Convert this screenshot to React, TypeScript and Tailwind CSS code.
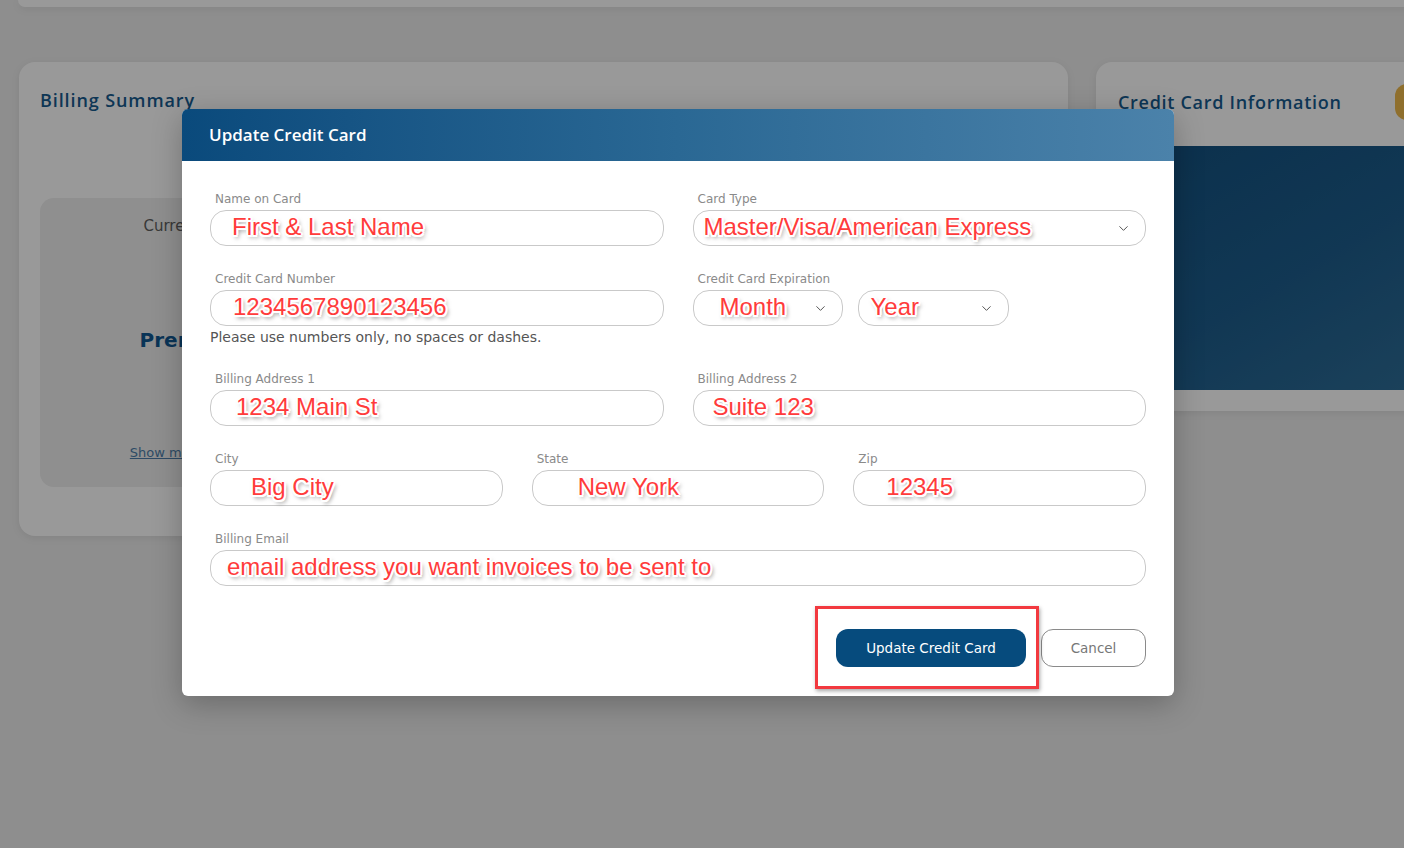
import { ChevronDown } from "lucide-react";
import type { ReactNode } from "react";

const note =
    "relative -top-[1px] font-['Liberation_Sans',Arial,sans-serif] text-[24px] leading-none text-[#ff3b3b] whitespace-nowrap [text-shadow:0_0_2px_#fff,1.5px_1.5px_0_#fff,-1.5px_-1.5px_0_#fff,1.5px_-1.5px_0_#fff,-1.5px_1.5px_0_#fff,2px_0_0_#fff,-2px_0_0_#fff,0_2px_0_#fff,0_-2px_0_#fff,2px_3px_4px_rgba(0,0,0,0.55)]";

function Field({ label, children }: { label: string; children: ReactNode }) {
    return (
        <div className="flex flex-col">
            <label className="ml-[5px] mb-[4px] text-[12px] leading-[13px] text-[#8a8a8a]">{label}</label>
            {children}
        </div>
    );
}

function Box({ text, pad, select, className = "" }: { text: string; pad: string; select?: boolean; className?: string }) {
    return (
        <div className={`flex h-[36px] items-center rounded-[16px] border border-[#c9c9c9] bg-white pr-[14px] ${className}`}>
            <span className={`${note} ${pad}`}>{text}</span>
            {select && <ChevronDown className="ml-auto text-[#555]" size={15} strokeWidth={1.6} />}
        </div>
    );
}

export default function App() {
    return (
        <div className="relative h-[848px] w-full overflow-hidden bg-[#ededed] font-['DejaVu_Sans',sans-serif]">
            {/* page behind the dialog */}
            <div className="w-[1560px]">
                <div className="ml-[18px] h-[7px] rounded-b-[12px] bg-white shadow-[0_2px_8px_rgba(0,0,0,0.08)]" />
                <div className="flex items-start gap-[28px] pl-[19px] pt-[55px]">
                    <section className="h-[474px] w-[1049px] rounded-[16px] bg-white px-[21px] pt-[25px] shadow-[0_2px_8px_rgba(0,0,0,0.08)]">
                        <h2 className="font-['Open_Sans',sans-serif] text-[18px] leading-[26px] font-semibold tracking-[0.9px] text-[#165a8e]">Billing Summary</h2>
                        <div className="mt-[85px] flex h-[289px] w-[300px] flex-col items-center rounded-[14px] bg-[#eeeeee] pt-[18px]">
                            <div className="text-[15px] leading-[20px] text-[#606060]">Current Plan</div>
                            <div className="mt-[90px] text-[20px] leading-[28px] font-semibold text-[#0f5892]">Premium</div>
                            <a className="mt-[90px] text-[13px] leading-[18px] text-[#4d7eaa] underline">Show more details</a>
                        </div>
                    </section>
                    <section className="h-[349px] w-[421px] rounded-[16px] bg-white shadow-[0_2px_8px_rgba(0,0,0,0.08)]">
                        <div className="flex h-[80px] items-center px-[22px]">
                            <h2 className="font-['Open_Sans',sans-serif] text-[18px] leading-[26px] font-semibold tracking-[0.7px] text-[#165a8e]">Credit Card Information</h2>
                            <div className="ml-auto h-[36px] w-[100px] rounded-[12px] bg-[#eeb94b]" />
                        </div>
                        <div className="mt-[4px] h-[244px] bg-linear-to-br from-[#12507f] via-[#1d5d8c] to-[#33739b]" />
                    </section>
                </div>
            </div>

            <div className="absolute inset-0 bg-black/40" />

            {/* dialog */}
            <div className="absolute left-[182px] top-[109px] w-[992px] overflow-hidden rounded-[6px] bg-white shadow-[0_8px_30px_rgba(0,0,0,0.25)]">
                <div className="flex h-[52px] items-center bg-linear-to-r from-[#0a4a7c] via-[#2a6894] to-[#4b82aa] px-[27px]">
                    <h3 className="font-['Open_Sans',sans-serif] text-[17px] font-semibold text-white">Update Credit Card</h3>
                </div>
                <div className="flex flex-col gap-[27px] px-[28px] pb-[29px] pt-[32px]">
                    <div className="grid grid-cols-2 gap-x-[29px]">
                        <Field label="Name on Card">
                            <Box text="First & Last Name" pad="pl-[21px]" />
                        </Field>
                        <Field label="Card Type">
                            <Box text="Master/Visa/American Express" pad="pl-[10px]" select />
                        </Field>
                    </div>
                    <div className="grid grid-cols-2 gap-x-[29px]">
                        <div className="flex flex-col">
                            <Field label="Credit Card Number">
                                <Box text="1234567890123456" pad="pl-[22px]" />
                            </Field>
                            <p className="mt-[2px] text-[14px] leading-[18px] text-[#555]">Please use numbers only, no spaces or dashes.</p>
                        </div>
                        <Field label="Credit Card Expiration">
                            <div className="flex gap-[15px]">
                                <Box text="Month" pad="pl-[26px]" select className="w-[150px]" />
                                <Box text="Year" pad="pl-[12px]" select className="w-[151px]" />
                            </div>
                        </Field>
                    </div>
                    <div className="grid grid-cols-2 gap-x-[29px]">
                        <Field label="Billing Address 1">
                            <Box text="1234 Main St" pad="pl-[25px]" />
                        </Field>
                        <Field label="Billing Address 2">
                            <Box text="Suite 123" pad="pl-[19px]" />
                        </Field>
                    </div>
                    <div className="grid grid-cols-3 gap-x-[29px]">
                        <Field label="City">
                            <Box text="Big City" pad="pl-[40px]" />
                        </Field>
                        <Field label="State">
                            <Box text="New York" pad="pl-[45px]" />
                        </Field>
                        <Field label="Zip">
                            <Box text="12345" pad="pl-[32px]" />
                        </Field>
                    </div>
                    <Field label="Billing Email">
                        <Box text="email address you want invoices to be sent to" pad="pl-[16px]" />
                    </Field>
                    <div className="mt-[16px] flex justify-end gap-[15px]">
                        <div className="relative">
                            <button className="h-[38px] w-[190px] rounded-[12px] bg-[#064b7d] text-[13.5px] text-white">Update Credit Card</button>
                            <div className="absolute -bottom-[22px] -left-[21px] -right-[13px] -top-[23px] border-[3px] border-[#f2393f] shadow-[1px_2px_4px_rgba(0,0,0,0.35)]" />
                        </div>
                        <button className="h-[38px] w-[105px] rounded-[12px] border border-[#8a8a8a] text-[13.5px] text-[#777]">Cancel</button>
                    </div>
                </div>
            </div>
        </div>
    );
}
